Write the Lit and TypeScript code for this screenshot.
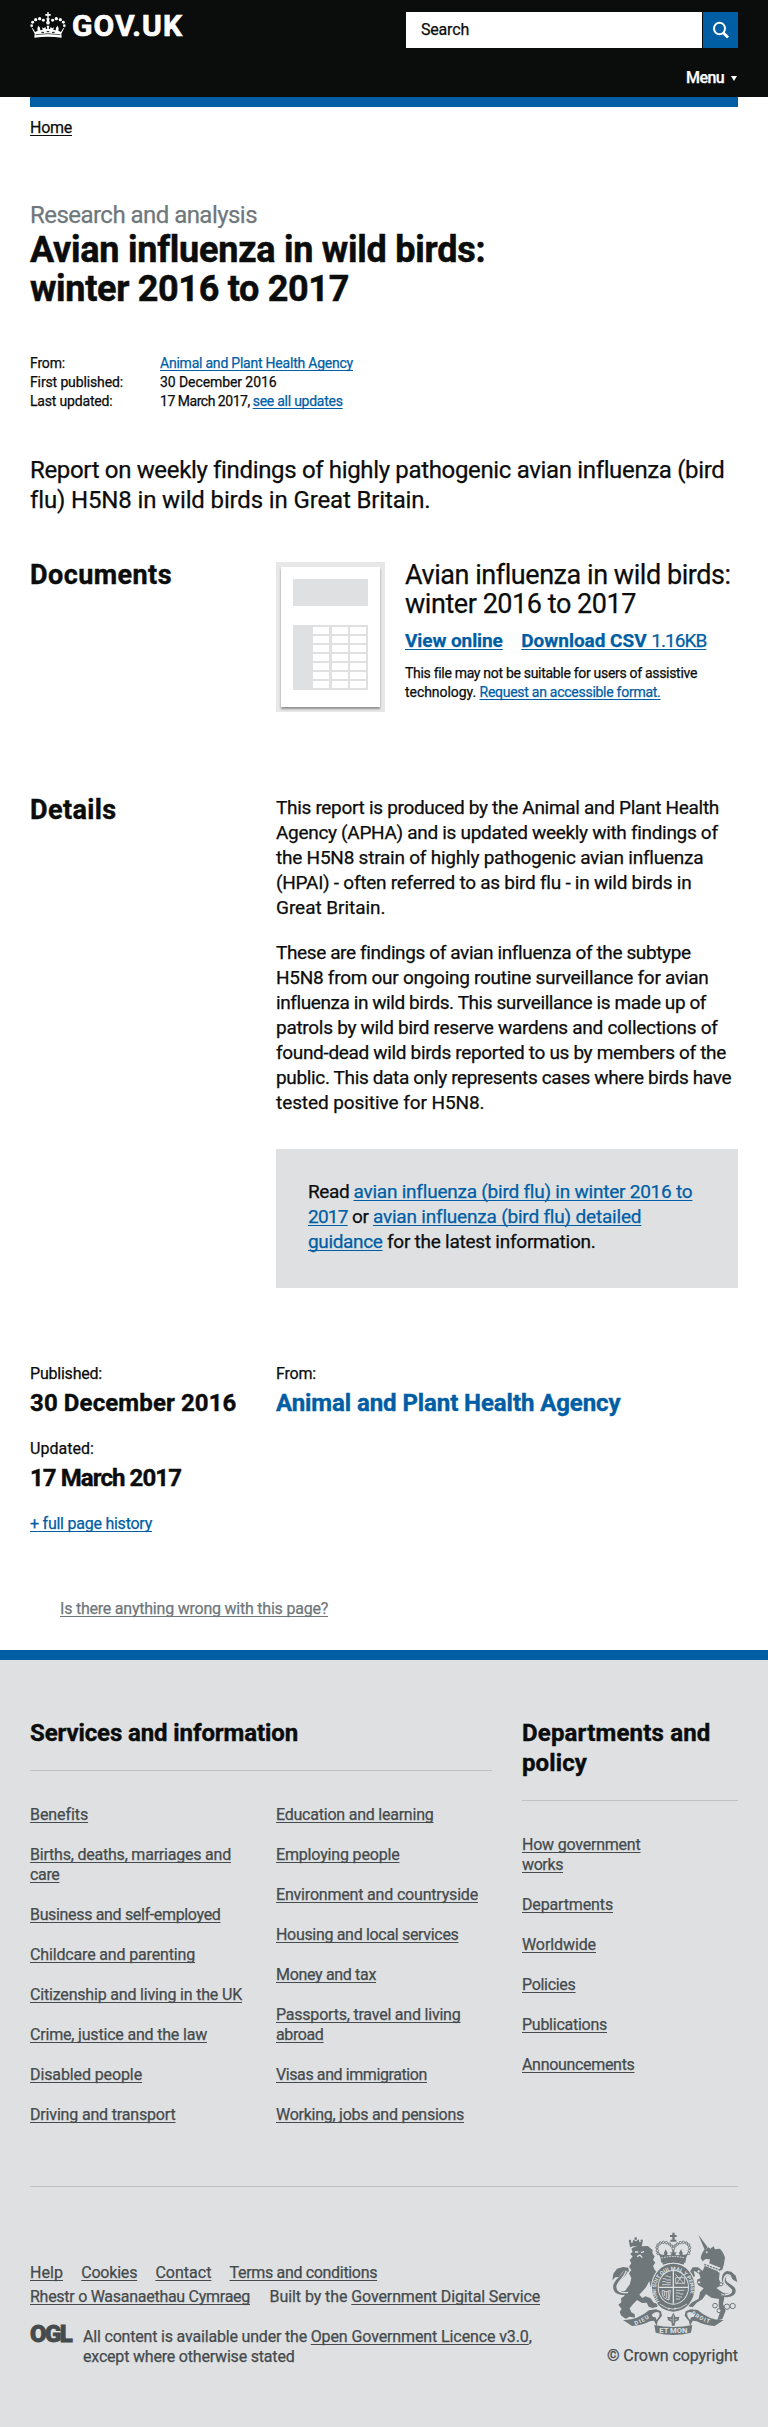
import { LitElement, html, css, svg } from "lit";
import { customElement, property } from "lit/decorators.js";

const FAMILY = 'Roboto, "Liberation Sans", sans-serif';
const pen = document.createElement("canvas").getContext("2d")!;

/** Letter spacing (px) that sets `text` to the given measure. */
function tracking(text: string, width: number, size: number, weight: number): string {
  pen.font = `${weight} ${size}px ${FAMILY}`;
  const natural = pen.measureText(text).width;
  return ((width - natural) / text.length).toFixed(3) + "px";
}

/** A run of text tracked to a given measure; `link` underlines it. */
function run(text: string, width: number, size = 16, weight = 400, link = false) {
  return html`<span class=${link ? "run link" : "run"} style="letter-spacing:${tracking(text, width, size, weight)}">${text}</span>`;
}
const link = (text: string, width: number, size = 16, weight = 400) => run(text, width, size, weight, true);

@customElement("gov-crown")
class GovCrown extends LitElement {
  static styles = css`:host { display: block; width: 36px; height: 26px; } svg { display: block; width: 36px; height: 26px; }`;
  render() {
    const pearls = [
      [35, 77, 4], [38, 67, 4.4], [47, 59, 5], [59, 56, 5], [70, 61, 4.4],
      [133, 77, 4], [130, 67, 4.4], [121, 59, 5], [109, 56, 5], [98, 61, 4.4], [84, 68, 5.5],
    ];
    return html`<svg viewBox="31 36 106 78" fill="#fff">
      ${pearls.map(([x, y, r]) => svg`<circle cx=${x} cy=${y} r=${r}/>`)}
      <path d="M82 36h4v6h6v5h-6v8h3l-2 9h-6l-2-9h3v-8h-6v-5h6z"/>
      <path d="M44 101 L34 82 L40 87 L45 96 L53 92 L52 84 L56 77 L60 84 L61 91 L68 90 L66 82 L71 85 L76 81 L78 87 L82 86 L80 77 L88 77 L86 86 L90 87 L92 81 L97 85 L102 82 L100 90 L107 91 L108 84 L112 77 L116 84 L115 92 L123 96 L128 87 L134 82 L124 101 L125 113 Q84 108 43 113 Z"/>
      <path d="M47 104 Q84 98 121 104" fill="none" stroke="#0b0c0c" stroke-width="2"/>
      <path d="M64 97h8M80 95h8M96 97h8" stroke="#0b0c0c" stroke-width="3"/>
    </svg>`;
  }
}

@customElement("royal-arms")
class RoyalArms extends LitElement {
  static styles = css`
    :host { display: block; -webkit-text-stroke: 0; }
    svg { display: block; width: 126px; height: 104px; font-family: Roboto, sans-serif; font-weight: 700; }
  `;
  render() {
    const c = "#6f777b";
    const bg = "#dee0e2";
    const arch = [[206, 98], [204, 90], [203, 81], [206, 73], [213, 67], [222, 65], [231, 66], [240, 70], [247, 76]];
    return html`<svg viewBox="68 34 378 312" fill=${c}>
      <defs>
        <path id="garter" d="M211 243 A52 58 0 1 1 296 238"/>
        <path id="left" d="M138 314 Q168 303 194 281"/>
        <path id="right" d="M305 279 Q330 302 378 313"/>
      </defs>

      <!-- lion -->
      <g>
        <path d="M122 80 L119 62 L129 67 L132 57 L140 62 L148 56 L151 65 L160 61 L157 79 Q140 73 122 80Z"/>
        <circle cx="139" cy="54" r="4"/><circle cx="122" cy="61" r="3.5"/><circle cx="157" cy="60" r="3.5"/>
        <path d="M126 84 Q142 72 160 77 L176 76 L183 83 L190 88 L189 97 L196 108 L191 117 L198 126 L191 136 L196 147 L204 157 L207 174 L200 187 L212 205 L203 214 L193 207 L184 198 L180 181 L170 200 L158 213 L150 222 L159 232 L168 227 L184 233 L193 246 L206 249 L204 258 L189 262 L178 258 L172 246 L158 247 L143 238 L131 251 L121 263 L126 275 L136 281 L137 291 L121 288 L109 294 L96 285 L91 274 L97 265 L87 252 L96 245 L95 233 L105 226 L107 211 L122 190 L126 172 L119 158 L126 148 L119 138 L126 128 L121 118 L130 108 L123 99 L130 94Z"/>
        <path d="M116 215 C88 223 76 211 77 196 C79 179 105 168 111 148" fill="none" stroke=${c} stroke-width="11"/>
        <path d="M116 215 C92 219 82 209 83 197 C86 180 108 169 111 148" fill="none" stroke=${bg} stroke-width="4"/>
        <path d="M69 179 L72 159 L83 144 L101 139 L117 141 L119 153 L106 148 L97 158 L89 169 L78 170Z"/>
        <path d="M137 94h10M155 96l9-3M143 108l9-5 7 8" fill="none" stroke=${bg} stroke-width="4"/>
      </g>

      <!-- unicorn -->
      <g>
        <path d="M327 42 L346 87 L355 80 Z"/>
        <path d="M344 88 L357 80 L363 84 L373 77 L377 86 L392 84 L401 96 L407 110 L404 130 L399 147 L383 153 L358 137 L362 116 L349 115 L340 122 L334 112 L337 101Z"/>
        <path d="M347 134 L391 156 L389 176 L397 194 L381 202 L399 215 L405 232 L401 250 L409 270 L399 295 L384 299 L392 275 L388 254 L389 235 L366 231 L350 220 L339 236 L322 246 L310 260 L295 256 L306 246 L328 234 L332 215 L343 203 L326 193 L323 177 L334 172 L329 158 L313 150 L317 167 L307 171 L300 156 L310 140 L326 140 L340 151Z"/>
        <path d="M346 129 L391 147" stroke=${bg} stroke-width="12"/>
        <path d="M345 131 L392 148" stroke=${c} stroke-width="4" stroke-dasharray="6 3"/>
        <path d="M395 221 C432 230 438 212 430 203 C418 191 400 190 404 170 C408 153 422 155 435 171" fill="none" stroke=${c} stroke-width="12"/>
        <path d="M395 221 C424 225 430 213 424 206 C414 195 399 190 405 172 C410 159 421 160 428 170" fill="none" stroke=${bg} stroke-width="5"/>
        <path d="M409 151 L426 153 L439 165 L444 184 L431 177 L424 164Z"/>
        <circle cx="352" cy="95" r="3" fill=${bg}/>
        <g fill=${bg} stroke=${c} stroke-width="3">
          <circle cx="377" cy="255" r="7"/><circle cx="389" cy="270" r="6"/><circle cx="413" cy="258" r="8"/><circle cx="430" cy="256" r="8"/><circle cx="395" cy="191" r="5"/><circle cx="328" cy="152" r="5"/><circle cx="329" cy="185" r="5"/><circle cx="401" cy="222" r="4"/>
        </g>
      </g>

      <!-- crown -->
      <g>
        <path d="M249 36h7v7h6v6h-6v8h5v6h-18v-6h6v-8h-7v-6h7z"/>
        <g fill=${bg} stroke=${c} stroke-width="3">
          ${arch.map(([x, y]) => svg`<circle cx=${x} cy=${y} r="3.6"/><circle cx=${504 - x} cy=${y} r="3.6"/>`)}
          <circle cx="252" cy="84" r="4"/>
        </g>
        <path d="M213 110 L207 98 L218 102 L225 102 L224 96 L229 86 L235 97 L233 103 L244 104 L247 99 L241 96 L249 95 L249 88 L255 88 L255 95 L263 96 L258 100 L260 104 L271 103 L269 97 L275 86 L280 96 L279 102 L287 102 L297 98 L291 110 L288 126 Q252 114 216 126Z"/>
        <path d="M216 112 Q252 103 288 112" fill="none" stroke=${bg} stroke-width="3" stroke-dasharray="5 3"/>
        <path d="M219 125 Q252 112 285 125 L283 132 Q252 120 221 132Z"/>
      </g>

      <!-- garter and shield -->
      <ellipse cx="252" cy="201" rx="67" ry="75" fill=${bg}/>
      <ellipse cx="252" cy="201" rx="64" ry="72"/>
      <ellipse cx="252" cy="200" rx="47" ry="52" fill=${bg}/>
      <text font-size="16" fill=${bg}><textPath href="#garter" textLength="222" lengthAdjust="spacingAndGlyphs">HONI SOIT QUI MAL Y PENSE</textPath></text>
      <ellipse cx="252" cy="200" rx="44" ry="49"/>
      <path d="M252 151v98M208 200h88" stroke=${bg} stroke-width="4"/>
      <g fill="none" stroke=${bg} stroke-width="2.5">
        <path d="M220 174h8l3 4h14M219 183h9l4 3h13M228 166h7l3 3h7M218 192h26"/>
        <path d="M258 161l28 30M260 191l20-29M259 171h27v17h-27z"/>
        <path d="M219 209v11q2 14 20 18l4-29q-12 8-24 0M225 211v15M231 212v20M237 211v25"/>
        <path d="M259 209h26M259 217h11l3 3h9M259 226h8l3 3h8M259 235h13"/>
      </g>
      <path d="M211 250 Q252 281 293 250" fill="none" stroke=${bg} stroke-width="2.5"/>
      <circle cx="239" cy="264" r="2.5" fill=${bg}/><circle cx="257" cy="264" r="2.5" fill=${bg}/>
      <path d="M252 276 L259 290 L270 288 L268 299 L258 303 L256 315 L248 315 L246 303 L236 299 L234 288 L245 290Z"/>
      <path d="M252 284v24M241 295l6 3M263 295l-6 3" stroke=${bg} stroke-width="2"/>

      <!-- motto ribbon -->
      <path d="M101 298 Q143 300 179 269 L200 266 L215 272 L218 285 L205 302 L202 316 L194 300 L181 302 Q158 315 128 316Z"/>
      <path d="M403 298 Q361 300 325 268 L304 266 L289 272 L286 285 L299 302 L302 316 L310 300 L323 302 Q346 315 376 316Z"/>
      <path d="M187 282 Q198 270 210 276 Q213 286 201 299 Q202 287 191 289Z" fill=${bg}/>
      <path d="M317 282 Q306 270 294 276 Q291 286 303 299 Q302 287 313 289Z" fill=${bg}/>
      <path d="M195 313 Q252 325 309 313 L305 336 Q252 350 199 336Z"/>
      <text x="210" y="337" font-size="19" fill=${bg} textLength="84" lengthAdjust="spacingAndGlyphs">ET MON</text>
      <text font-size="17" fill=${bg}><textPath href="#left" textLength="48">DIEU</textPath></text>
      <text font-size="17" fill=${bg}><textPath href="#right" textLength="62">DROIT</textPath></text>
    </svg>`;
  }
}

@customElement("sheet-thumbnail")
class SheetThumbnail extends LitElement {
  static styles = css`
    :host { display: block; width: 109px; height: 150px; background: #e7e7e7; box-sizing: border-box; padding: 5px; }
    .sheet { height: 140px; background: #fff; box-shadow: 0 2px 2px rgba(11, 12, 12, 0.4); box-sizing: border-box; padding: 12px 12px 0; }
    .banner { height: 27px; background: #dee0e2; margin-bottom: 19px; }
    .grid { height: 65px; box-sizing: border-box; background: #dee0e2; padding: 2px 2px 0 20px; display: grid; grid-template-columns: repeat(3, 16px); grid-auto-rows: 7px; column-gap: 2.5px; row-gap: 2px; }
    .cell { background: #fff; }
  `;
  render() {
    return html`<div class="sheet"><div class="banner"></div><div class="grid">${Array.from({ length: 21 }, () => html`<div class="cell"></div>`)}</div></div>`;
  }
}

type Item = [string, number][];

@customElement("app-root")
class AppRoot extends LitElement {
  @property({ attribute: false }) first: Item[] = [
    [["Benefits", 57.5]], [["Births, deaths, marriages and", 201], ["care", 29.5]], [["Business and self-employed", 190.5]],
    [["Childcare and parenting", 165]], [["Citizenship and living in the UK", 212]], [["Crime, justice and the law", 177]],
    [["Disabled people", 112]], [["Driving and transport", 145.5]],
  ];
  @property({ attribute: false }) second: Item[] = [
    [["Education and learning", 157.5]], [["Employing people", 123.5]], [["Environment and countryside", 202]],
    [["Housing and local services", 182.5]], [["Money and tax", 100]], [["Passports, travel and living", 184.5], ["abroad", 47.5]],
    [["Visas and immigration", 151]], [["Working, jobs and pensions", 188]],
  ];
  @property({ attribute: false }) third: Item[] = [
    [["How government", 118.5], ["works", 41]], [["Departments", 91]], [["Worldwide", 74]], [["Policies", 53.5]],
    [["Publications", 85]], [["Announcements", 112.5]],
  ];

  static styles = css`
    :host { display: block; min-height: 2427px; background: #fff; color: #0b0c0c; font: 16px/20px Roboto, "Liberation Sans", sans-serif; -webkit-text-stroke: 0.25px; }
    .run { white-space: pre; }
    .link { text-decoration: underline; text-decoration-thickness: 1px; text-underline-offset: 1.5px; text-decoration-skip-ink: none; }
    .blue { color: #005ea5; }
    .grey { color: #6f777b; }
    header { background: #0b0c0c; color: #fff; height: 97px; box-sizing: border-box; padding: 12px 30px 0; display: flex; justify-content: space-between; }
    .brand { display: flex; align-items: flex-start; gap: 6px; font-size: 30px; font-weight: 700; line-height: 28px; -webkit-text-stroke: 0.7px; }
    .tools { width: 332px; }
    .search { display: flex; height: 36px; gap: 1px; }
    .field { flex: 1; background: #fff; color: #0b0c0c; padding: 8px 15px; }
    .go { width: 35px; background: #005ea5; }
    .go svg { display: block; }
    .menu { display: flex; justify-content: flex-end; align-items: center; gap: 7px; margin-top: 20px; font-weight: 500; }
    .caret { border: 3px solid transparent; border-top: 5px solid #fff; border-bottom: 0; margin-right: 1px; }
    main { padding: 0 30px; height: 1553px; box-sizing: border-box; }
    .bar { height: 10px; background: #005ea5; }
    .crumb { padding-top: 11px; }
    .kind { margin-top: 62px; font-size: 24px; line-height: 30px; }
    h1, h2, h3, p { margin: 0; }
    h1 { padding-top: 1px; font-size: 36px; line-height: 39px; font-weight: 700; -webkit-text-stroke: 0.5px; }
    .meta { margin-top: 45px; display: grid; grid-template-columns: 130px 1fr; font-size: 14px; line-height: 19px; }
    .lead { margin-top: 44px; font-size: 24px; line-height: 30px; }
    .row { display: grid; grid-template-columns: 246px 1fr; }
    .documents { margin-top: 46px; height: 234px; }
    h2 { font-size: 27px; line-height: 29px; font-weight: 700; -webkit-text-stroke: 0.4px; }
    .details h2 { padding-top: 1px; }
    .attachment { display: flex; gap: 20px; }
    .attachment sheet-thumbnail { margin-top: 1px; }
    .title { font-size: 27px; line-height: 29px; }
    .actions { display: flex; margin-top: 9px; gap: 18.5px; font-size: 19px; line-height: 25px; color: #005ea5; }
    .actions b { font-weight: 700; }
    .note { margin-top: 11px; font-size: 14px; line-height: 19px; }
    .body { font-size: 19px; line-height: 25px; }
    .body p + p { margin-top: 20px; }
    .callout { margin-top: 34px; height: 139px; box-sizing: border-box; background: #dee0e2; padding: 30px 32px; }
    .dates { margin-top: 76px; }
    .strong { font-size: 24px; line-height: 30px; font-weight: 700; margin-top: 4px; -webkit-text-stroke: 0.4px; }
    .updated { margin-top: 21px; }
    .history { margin-top: 21px; }
    .wrong { margin-top: 65px; padding-left: 30px; }
    footer { border-top: 10px solid #005ea5; background: #dee0e2; height: 777px; box-sizing: border-box; padding: 58px 30px 0; color: #454a4c; }
    .top { display: flex; gap: 30px; height: 468px; border-bottom: 1px solid #bfc1c3; }
    .services { width: 462px; }
    .policy { width: 216px; }
    h3 { font-size: 24px; line-height: 30px; font-weight: 700; color: #0b0c0c; padding-bottom: 22px; border-bottom: 1px solid #bfc1c3; margin-bottom: 34px; -webkit-text-stroke: 0.4px; }
    .columns { display: grid; grid-template-columns: 246px 1fr; }
    .list { display: flex; flex-direction: column; gap: 20px; }
    .bottom { display: flex; justify-content: space-between; }
    .support { padding-top: 74px; line-height: 24px; }
    .links { display: flex; gap: 18.2px; }
    .built { gap: 19.6px; }
    .licence { display: flex; gap: 12px; margin-top: 18px; line-height: 20px; }
    .ogl { font-size: 24px; line-height: 15px; font-weight: 900; width: 41px; color: #454a4c; -webkit-text-stroke: 0.8px #454a4c; }
    .copyright { padding-top: 45px; display: flex; flex-direction: column; align-items: flex-end; gap: 10px; }
  `;

  list(items: Item[]) {
    return html`<div class="list">${items.map((item) => html`<div>${item.map(([t, w], i) => html`${i ? html`<br />` : ""}${link(t, w)}`)}</div>`)}</div>`;
  }

  lines(rows: [string, number][], size: number, weight = 400) {
    return rows.map(([t, w], i) => html`${i ? html`<br />` : ""}${run(t, w, size, weight)}`);
  }

  render() {
    return html`
      <header>
        <div class="brand"><gov-crown></gov-crown>${run("GOV.UK", 111, 30, 700)}</div>
        <div class="tools">
          <div class="search">
            <div class="field">${run("Search", 48)}</div>
            <div class="go"><svg width="35" height="36" fill="none" stroke="#fff"><ellipse cx="16.5" cy="16.5" rx="5.5" ry="5.8" stroke-width="2"/><path d="M20 20.5l5 5" stroke-width="2.8"/></svg></div>
          </div>
          <div class="menu">${run("Menu", 38, 16, 500)}<span class="caret"></span></div>
        </div>
      </header>
      <main>
        <div class="bar"></div>
        <div class="crumb">${link("Home", 42)}</div>
        <div class="kind grey">${run("Research and analysis", 227, 24)}</div>
        <h1>${this.lines([["Avian influenza in wild birds:", 455], ["winter 2016 to 2017", 319]], 36, 700)}</h1>
        <div class="meta">
          <span>${run("From:", 35, 14)}</span><span class="blue">${link("Animal and Plant Health Agency", 193, 14)}</span>
          <span>${run("First published:", 93, 14)}</span><span>${run("30 December 2016", 116.5, 14)}</span>
          <span>${run("Last updated:", 82.5, 14)}</span><span>${run("17 March 2017, ", 92.7, 14)}<span class="blue">${link("see all updates", 90, 14)}</span></span>
        </div>
        <p class="lead">${this.lines([["Report on weekly findings of highly pathogenic avian influenza (bird", 693], ["flu) H5N8 in wild birds in Great Britain.", 400]], 24)}</p>
        <section class="row documents">
          <h2>${run("Documents", 142, 27, 700)}</h2>
          <div class="attachment">
            <sheet-thumbnail></sheet-thumbnail>
            <div>
              <div class="title">${this.lines([["Avian influenza in wild birds:", 325], ["winter 2016 to 2017", 231]], 27)}</div>
              <div class="actions"><b>${link("View online", 97.8, 19, 700)}</b><span><b>${link("Download CSV ", 130, 19, 700)}</b>${link("1.16KB", 55, 19)}</span></div>
              <div class="note">${run("This file may not be suitable for users of assistive", 291.5, 14)}<br />${run("technology. ", 74.5, 14)}<span class="blue">${link("Request an accessible format.", 181, 14)}</span></div>
            </div>
          </div>
        </section>
        <section class="row details">
          <h2>${run("Details", 86.5, 27, 700)}</h2>
          <div class="body">
            <p>${this.lines([
              ["This report is produced by the Animal and Plant Health", 443],
              ["Agency (APHA) and is updated weekly with findings of", 441],
              ["the H5N8 strain of highly pathogenic avian influenza", 427],
              ["(HPAI) - often referred to as bird flu - in wild birds in", 415],
              ["Great Britain.", 109.5]], 19)}</p>
            <p>${this.lines([
              ["These are findings of avian influenza of the subtype", 413.5],
              ["H5N8 from our ongoing routine surveillance for avian", 432.5],
              ["influenza in wild birds. This surveillance is made up of", 430],
              ["patrols by wild bird reserve wardens and collections of", 441.5],
              ["found-dead wild birds reported to us by members of the", 450],
              ["public. This data only represents cases where birds have", 455.5],
              ["tested positive for H5N8.", 208.5]], 19)}</p>
            <div class="callout">${run("Read ", 45.5, 19)}<span class="blue">${link("avian influenza (bird flu) in winter 2016 to", 338, 19)}<br />${link("2017", 39.7, 19)}</span>${run(" or ", 25.2, 19)}<span class="blue">${link("avian influenza (bird flu) detailed", 267.5, 19)}<br />${link("guidance", 74.5, 19)}</span>${run(" for the latest information.", 213, 19)}</div>
          </div>
        </section>
        <section class="row dates">
          <div>
            ${run("Published:", 72)}
            <div class="strong">${run("30 December 2016", 206.5, 24, 700)}</div>
            <div class="updated">${run("Updated:", 64)}</div>
            <div class="strong">${run("17 March 2017", 151, 24, 700)}</div>
            <div class="history blue">${link("+ full page history", 122)}</div>
          </div>
          <div>${run("From:", 40)}<div class="strong blue">${run("Animal and Plant Health Agency", 344.5, 24, 700)}</div></div>
        </section>
        <div class="wrong grey">${link("Is there anything wrong with this page?", 268)}</div>
      </main>
      <footer>
        <div class="top">
          <div class="services">
            <h3>${run("Services and information", 268, 24, 700)}</h3>
            <div class="columns">${this.list(this.first)}${this.list(this.second)}</div>
          </div>
          <div class="policy">
            <h3>${this.lines([["Departments and", 188.5], ["policy", 65]], 24, 700)}</h3>
            ${this.list(this.third)}
          </div>
        </div>
        <div class="bottom">
          <div class="support">
            <div class="links">${link("Help", 33)}${link("Cookies", 56)}${link("Contact", 56)}${link("Terms and conditions", 147.5)}</div>
            <div class="links built">${link("Rhestr o Wasanaethau Cymraeg", 220)}<span>${run("Built by the ", 81.7)}${link("Government Digital Service", 188.7)}</span></div>
            <div class="licence"><span class="ogl">${run("OGL", 41, 24, 900)}</span><span>${run("All content is available under the ", 227.7)}${link("Open Government Licence v3.0", 218)},<br />${run("except where otherwise stated", 211.5)}</span></div>
          </div>
          <div class="copyright"><royal-arms></royal-arms>${run("© Crown copyright", 131)}</div>
        </div>
      </footer>`;
  }
}
